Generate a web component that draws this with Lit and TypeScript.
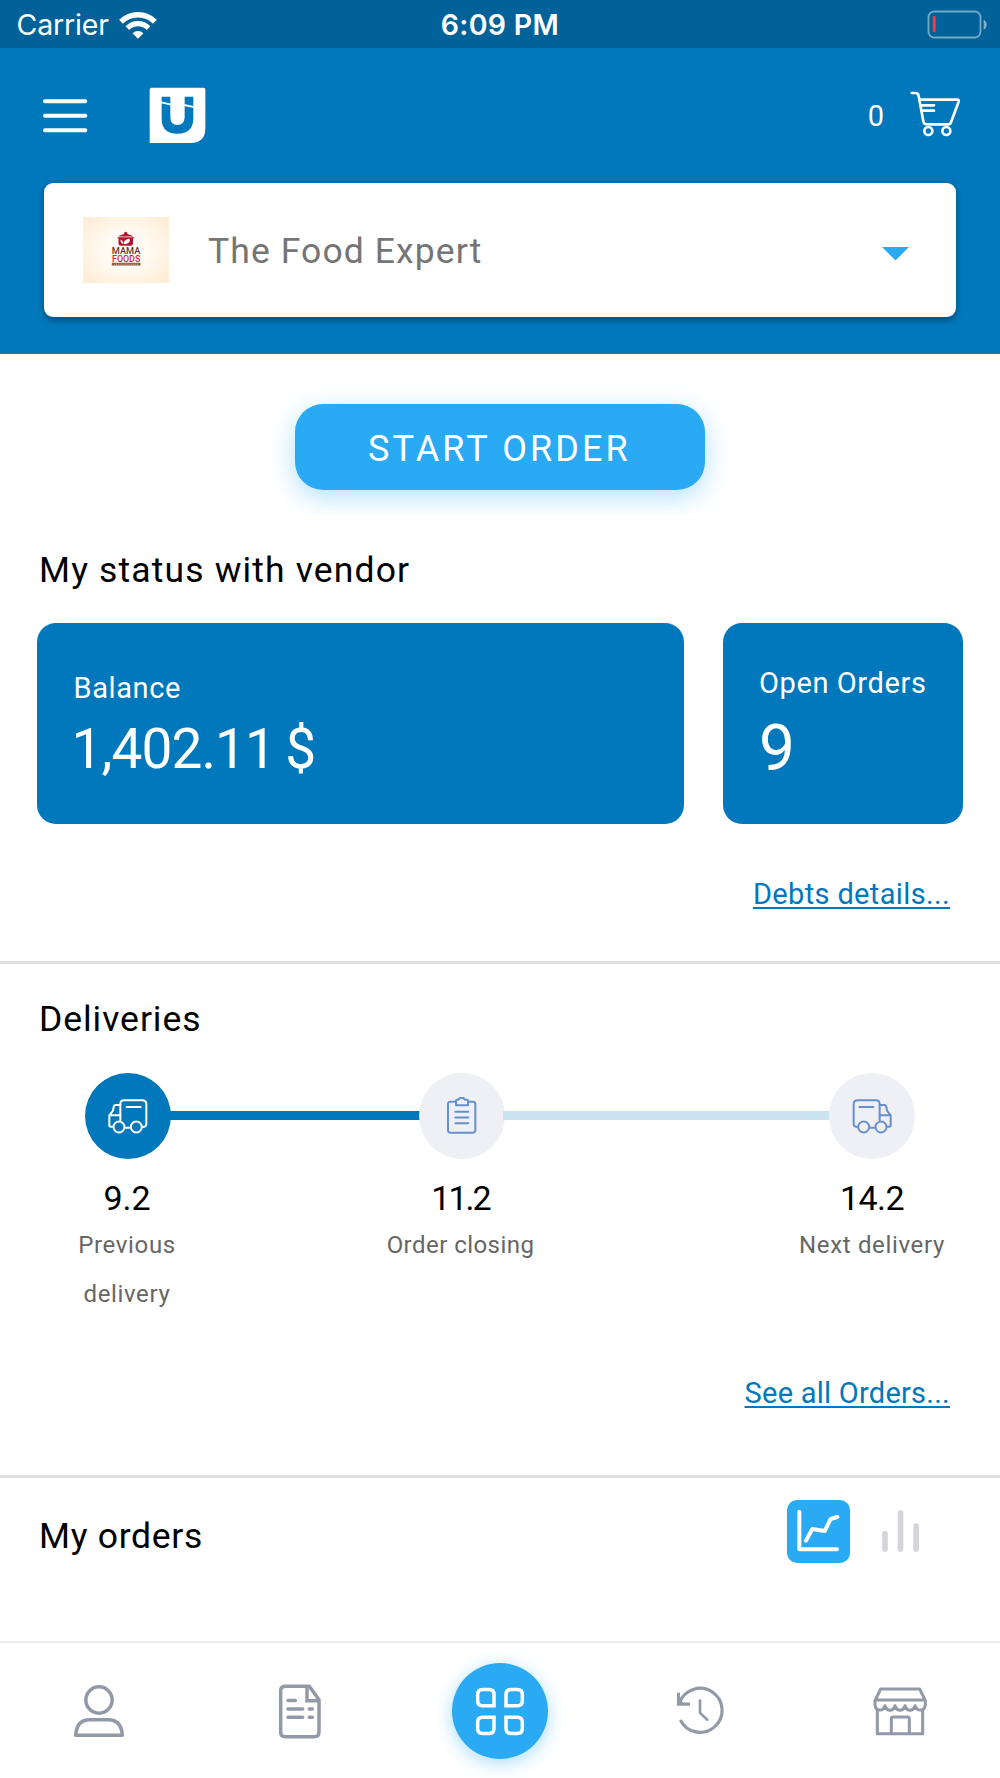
import { LitElement, html, css, svg, nothing } from "lit";
import { customElement, property } from "lit/decorators.js";

/* Icon artwork is drawn on a 3x grid: three view-box units equal one CSS pixel. */
interface Art {
  x: number;
  y: number;
  w: number;
  h: number;
  body: unknown;
}

const truck = svg`
  <g fill="none" stroke="currentColor" stroke-width="6" stroke-linecap="round" stroke-linejoin="round">
    <path d="M360 420V371q0-11 11-11h55q12 0 12 12v59q0 8-9 9M375 442h14"/>
    <path d="M360 374h-14q-5 0-6 6l-2 11-11 14v30q0 4 5 4h7M327 405h33"/>
    <path d="M379 380h42"/>
    <circle cx="356" cy="440" r="16.5"/><circle cx="408" cy="440" r="16.5"/>
  </g>`;

const ART: Record<string, Art> = {
  wifi: { x: 358, y: 28, w: 116, h: 86, body: svg`
    <g fill="none" stroke="#fff">
      <path stroke-width="16.5" d="M364.1 60.1A72 72 0 0 1 465.9 60.1"/>
      <path stroke-width="15.5" d="M383.2 79.2A45 45 0 0 1 446.8 79.2"/>
    </g>
    <path fill="#fff" d="M415 111L398.7 94.7A23 23 0 0 1 431.3 94.7Z"/>` },
  battery: { x: 1282, y: 29, w: 184, h: 88, body: svg`
    <rect x="1286.500" y="33.500" width="156" height="78" rx="17" fill="none" stroke="#fff" stroke-opacity=".45" stroke-width="5.500"/>
    <rect x="1299" y="47" width="9" height="48" rx="3" fill="#ff3b30"/>
    <path d="M1452 58q9 5 9 15t-9 15z" fill="#fff" fill-opacity=".5"/>` },
  menu: { x: 126, y: 294, w: 138, h: 108, body: svg`
    <path d="M135 304H256M135 347.500H256M135 390.500H256" stroke="#fff" stroke-width="12" stroke-linecap="round"/>` },
  brand: { x: 448, y: 263, w: 171, h: 171, body: svg`
    <path fill="#fff" d="M450 271q0-6 6-6h155q6 0 6 6V387q0 44-44 44H450z"/>
    <path fill="#0078bb" d="M486 292h26v62q0 23 21 23t22-23v-62h26v64q0 47-48 47t-47-47z"/>
    <path stroke="#fff" stroke-width="5.500" d="M482 308.500L514 316M553 317L584 323.500"/>` },
  cart: { x: 1225, y: 268, w: 157, h: 144, body: svg`
    <g fill="none" stroke="#fff" stroke-width="8" stroke-linecap="round" stroke-linejoin="round">
      <path d="M1233 277h11q9 0 10 9l14 76q2 9 9 9h66q6 0 8-6l23-62q2-6-5-6H1259"/>
      <path d="M1263 314h37M1266 330h34"/>
      <circle cx="1283" cy="391" r="12"/><circle cx="1337" cy="391" r="12"/>
    </g>` },
  truckLeft: { x: 320, y: 350, w: 126, h: 114, body: truck },
  truckRight: { x: 320, y: 350, w: 126, h: 114, body: svg`<g transform="translate(766 0) scale(-1 1)">${truck}</g>` },
  clipboard: { x: 1322, y: 350, w: 126, h: 114, body: svg`
    <g fill="none" stroke="currentColor" stroke-width="6" stroke-linejoin="round" stroke-linecap="round">
      <path d="M1366 364h-16q-7 0-7 7v79q0 7 7 7h68q7 0 7-7v-79q0-7-7-7h-15"/>
      <path d="M1367 375v-14q0-3 3-3h4q4-6 10-6t10 6h5q4 0 4 3v14z"/>
      <path d="M1365 394h39M1365 411.500h39M1365 429h39"/>
    </g>` },
  line: { x: 862, y: 420, w: 189, h: 189, body: svg`
    <g fill="none" stroke="#fff" stroke-width="12" stroke-linecap="round" stroke-linejoin="round">
      <path d="M899 455V567.500H1012M919 542L938 507L975 513L993 477L1013 471"/>
    </g>` },
  bars: { x: 1140, y: 445, w: 124, h: 132, body: svg`
    <path d="M1155 519.500V565M1201.500 457V565M1248.500 496V565" stroke="#d4d4da" stroke-width="17" stroke-linecap="round"/>` },
  user: { x: 210, y: 151, w: 180, h: 180, body: svg`
    <g fill="none" stroke="currentColor" stroke-width="10.500" stroke-linejoin="round">
      <circle cx="297" cy="208" r="39.500"/>
      <path d="M227 314H367Q364 267 325 267H269Q230 267 227 314Z"/>
    </g>` },
  doc: { x: 810, y: 151, w: 180, h: 180, body: svg`
    <g fill="none" stroke="currentColor" stroke-width="10.500" stroke-linejoin="round" stroke-linecap="round">
      <path d="M928 167H856q-14 0-14 14V304q0 14 14 14h87q14 0 14-14V207Z"/>
      <path stroke-linejoin="miter" d="M921 169V210H956"/>
      <path d="M864 209.500h22M864 235h44M928 235h9M864 260h44M928 260h9"/>
    </g>` },
  grid: { x: -90, y: 151, w: 180, h: 180, body: svg`
    <g fill="none" stroke="#fff" stroke-width="10.500">
      <path d="M-18 225.500H-52q-15 0-15-15v-19q0-15 15-15h19q15 0 15 15z"/>
      <path d="M18 225.500H52q15 0 15-15v-19q0-15-15-15h-19q-15 0-15 15z"/>
      <path d="M-18 259.500H-52q-15 0-15 15v19q0 15 15 15h19q15 0 15-15z"/>
      <path d="M18 259.500H52q15 0 15 15v19q0 15-15 15h-19q-15 0-15-15z"/>
    </g>` },
  history: { x: 510, y: 151, w: 180, h: 180, body: svg`
    <g fill="none" stroke="currentColor" stroke-width="9.500">
      <path d="M538 217A66 66 0 1 1 541 268"/>
      <path d="M535.500 186V220.500H570"/>
      <path stroke-width="8" stroke-linecap="round" stroke-linejoin="round" d="M600 210V247L622 267"/>
    </g>
    <path d="M534 222V200L556 222z" fill="currentColor"/>` },
  store: { x: 1110, y: 151, w: 180, h: 180, body: svg`
    <g fill="none" stroke="currentColor" stroke-width="9" stroke-linejoin="round">
      <path d="M1142 175H1259L1275 208H1126Z"/>
      <path d="M1125 208V222C1127 243 1149 243 1155 225C1161 243 1179 243 1185 225C1191 243 1209 243 1215 225C1221 243 1239 243 1245 225C1251 243 1274 243 1276 222V208"/>
      <path d="M1132 236V309H1268V236"/>
      <path d="M1174 309V264q0-5 5-5h44q5 0 5 5V309"/>
    </g>` },
};

@customElement("app-icon")
class AppIcon extends LitElement {
  @property() name = "";
  static styles = css`
    :host { display: block; flex: none; }
    svg { display: block; }
  `;
  render() {
    const a = ART[this.name];
    if (!a) return nothing;
    return html`<svg width=${a.w / 3} height=${a.h / 3} viewBox="${a.x} ${a.y} ${a.w} ${a.h}" aria-hidden="true">${a.body}</svg>`;
  }
}

@customElement("vendor-logo")
class VendorLogo extends LitElement {
  static styles = css`
    :host { display: block; flex: none; }
    svg { display: block; }
    .name { font-family: Roboto, sans-serif; font-weight: 500; letter-spacing: 0; }
    .first { fill: #5a3a2e; }
    .second { fill: #c5283a; }
  `;
  render() {
    return html`
      <svg width="86" height="66" viewBox="0 0 86 66">
        <defs>
          <radialGradient id="glow" cx=".5" cy=".5" r=".68">
            <stop offset="0" stop-color="#fff"/>
            <stop offset=".45" stop-color="#fff9f0"/>
            <stop offset="1" stop-color="#ffecd2"/>
          </radialGradient>
        </defs>
        <rect width="86" height="66" fill="url(#glow)"/>
        <g fill="#b3142b">
          <circle cx="42.700" cy="16.200" r="1.500"/>
          <path d="M35.500 19.600q1-1.500 3-1.700q4-2.400 8.500 0q2 .2 3 1.700z"/>
          <path d="M34.500 20.300h16.500v1H50v5q0 2.500-2.600 2.500h-9.300q-2.600 0-2.600-2.500v-5h-1z"/>
        </g>
        <path d="M41 27.300q-1.500-4 5.500-5.800q1.500 5.300-5.500 5.800zM37.500 22.500q3 1 2.800 4.500q-3-1-2.800-4.500z" fill="#fff"/>
        <text class="name" font-size="8.800"><tspan class="first" x="28.800" y="36.700" textLength="28.500" lengthAdjust="spacingAndGlyphs">MAMA</tspan><tspan class="second" x="29" y="44.700" textLength="28.300" lengthAdjust="spacingAndGlyphs">FOODS</tspan></text>
        <rect x="28.800" y="45.800" width="28.700" height="2.700" fill="#8a5a42"/>
        <path d="M31 47.200h24" stroke="#d9bda8" stroke-width=".8" stroke-dasharray="1.200 .7"/>
      </svg>`;
  }
}

const STOPS = [
  { id: "previous", date: "9.2", label: "Previous delivery", icon: "truckLeft" },
  { id: "closing", date: "11.2", label: "Order closing", icon: "clipboard" },
  { id: "next", date: "14.2", label: "Next delivery", icon: "truckRight" },
];

const TABS = ["user", "doc", "grid", "history", "store"];

@customElement("app-root")
class AppRoot extends LitElement {
  static styles = css`
    :host {
      display: block;
      width: 1000px;
      height: 1778px;
      overflow: hidden;
      background: #fff;
      color: #000;
      font-family: Roboto, "Liberation Sans", sans-serif;
      -webkit-font-smoothing: antialiased;
    }
    * { box-sizing: border-box; }
    .screen { display: flex; flex-direction: column; height: 1778px; }

    .status {
      display: grid;
      grid-template-columns: 1fr auto 1fr;
      align-items: center;
      height: 48px;
      padding: 2px 11.5px 0 11.5px;
      background: #006299;
      color: #fff;
      font: 400 28.5px/46px Inter, sans-serif;
    }
    .carrier { display: flex; align-items: center; gap: 10px; padding-left: 5px; letter-spacing: -0.15px; }
    .clock { font-weight: 600; font-size: 28.5px; letter-spacing: 0.3px; }
    .power { justify-self: end; }

    .header { height: 306px; background: #0078bb; color: #fff; padding: 0 44.5px 0 44px; }
    .bar { display: flex; align-items: center; height: 135px; margin: 0 -5.5px 0 -2.5px; }
    .brand { margin-left: 61px; }
    .count { margin-left: auto; margin-right: 24.5px; font-size: 29px; line-height: 40px; padding-top: 1px; }
    .cart { margin-bottom: 4px; }
    .vendor {
      display: flex;
      align-items: center;
      height: 134px;
      padding: 0 46px 0 39px;
      border-radius: 9px;
      background: #fff;
      box-shadow: 0 4px 6px rgba(0, 0, 0, 0.27), 0 0 6px rgba(0, 0, 0, 0.12);
      color: #757575;
      font-size: 35.5px;
      letter-spacing: 1.1px;
    }
    .vendor-name { margin-left: 39px; padding-top: 2px; }
    .caret {
      width: 28px;
      height: 14px;
      margin-left: auto;
      margin-top: 7px;
      background: #29aaf2;
      clip-path: polygon(0 0, 100% 0, 50% 100%);
    }

    .hero { display: flex; justify-content: center; height: 161px; padding-top: 50px; overflow: hidden; }
    .start {
      width: 410px;
      height: 86px;
      padding: 5px 1px 0 0;
      border: 0;
      border-radius: 28px;
      background: #29aaf2;
      box-shadow: 0 7px 26px rgba(41, 170, 242, 0.36);
      color: #fff;
      font: 400 36px/81px Roboto, sans-serif;
      letter-spacing: 3.1px;
      text-align: center;
    }

    .heading { margin: 0; font-size: 35.5px; font-weight: 400; line-height: 50px; letter-spacing: 1.1px; }
    .link {
      align-self: flex-end;
      color: #0078bb;
      font-size: 29px;
      line-height: 40px;
      text-decoration: underline;
      text-decoration-thickness: 2px;
      text-underline-offset: 3px;
      text-decoration-skip-ink: none;
    }
    .debts { margin: 50px 13px 0 0; letter-spacing: 0.36px; }
    .all { letter-spacing: 0.25px; }

    .money { display: flex; flex-direction: column; height: 446px; padding: 30px 37px 0; }
    .money .heading { padding-left: 2px; letter-spacing: 1.15px; }
    .cards { display: flex; justify-content: space-between; margin-top: 28px; }
    .card { height: 200.5px; border-radius: 19px; background: #0078bb; color: #fff; padding-left: 36.5px; }
    .balance { width: 647px; padding-top: 45px; }
    .open { width: 240px; padding-top: 40px; padding-left: 36px; }
    .card-label { font-size: 29px; line-height: 40px; letter-spacing: 0.6px; }
    .card-value { white-space: nowrap; }
    .balance .card-value { margin-top: 11px; margin-left: -2px; font-size: 55px; line-height: 60px; letter-spacing: -0.9px; word-spacing: -2.5px; }
    .open .card-value { margin-top: 11px; margin-left: 0; font-size: 64px; line-height: 69px; }

    .rule { flex: none; height: 3px; background: #dfdfdf; }

    .deliveries { display: flex; flex-direction: column; height: 511px; padding: 30px 0 0; }
    .deliveries .heading { padding-left: 39px; letter-spacing: 0.95px; }
    .track {
      display: grid;
      grid-template-columns: 85px 86px 248px 86px 324px 86px;
      align-items: center;
      height: 86.5px;
      margin-top: 28.5px;
    }
    .dot {
      display: flex;
      align-items: center;
      justify-content: center;
      height: 86px;
      border-radius: 50%;
      background: #eff0f6;
      color: #668fd0;
    }
    .dot.done { background: #0078bb; color: #fff; }
    .dot.previous { grid-column: 2; }
    .segment { height: 9px; margin: 0 -2px; background: #0078bb; }
    .segment.ahead { background: #cbe3f0; }
    .stops { display: grid; grid-template-columns: 254px 413px 410px; height: 178px; padding-top: 11px; margin-right: -77px; }
    .stop { text-align: center; }
    .stop.previous { padding: 0 62px; }
    .date { font-size: 34px; line-height: 56px; }
    .closing .date { letter-spacing: -2px; }
    .next .date { letter-spacing: -0.6px; }
    .stop-label { font-size: 24px; line-height: 48.5px; letter-spacing: 0.65px; color: #666; margin-top: -5px; }
    .closing .stop-label { letter-spacing: 0.45px; }
    .all { margin: 36px 50px 0 0; }

    .orders { display: flex; justify-content: space-between; height: 163px; padding: 0 79px 0 39px; }
    .orders .heading { margin-top: 33px; letter-spacing: 0.7px; }
    .toggle { display: flex; align-items: flex-start; gap: 30px; padding-top: 22px; }
    .mode { display: flex; align-items: center; height: 61px; }
    .mode.on { height: 63px; border-radius: 10px; background: #29aaf2; }

    .tabs {
      display: grid;
      grid-template-columns: repeat(5, 1fr);
      align-items: center;
      justify-items: center;
      height: 137px;
      border-top: 2px solid #ebebeb;
      color: #9299a7;
    }
    .tab { display: flex; align-items: center; justify-content: center; width: 96px; height: 96px; }
    .tab.grid { border-radius: 50%; background: #29aaf2; box-shadow: 0 4px 18px rgba(41, 170, 242, 0.4); }
  `;

  render() {
    return html`
      <div class="screen">
        <div class="status">
          <div class="carrier"><span>Carrier</span><app-icon name="wifi"></app-icon></div>
          <div class="clock">6:09 PM</div>
          <app-icon class="power" name="battery"></app-icon>
        </div>

        <header class="header">
          <div class="bar">
            <app-icon name="menu"></app-icon>
            <app-icon class="brand" name="brand"></app-icon>
            <span class="count">0</span>
            <app-icon class="cart" name="cart"></app-icon>
          </div>
          <div class="vendor">
            <vendor-logo></vendor-logo>
            <span class="vendor-name">The Food Expert</span>
            <span class="caret"></span>
          </div>
        </header>

        <div class="hero"><button class="start">START ORDER</button></div>

        <section class="money">
          <h2 class="heading">My status with vendor</h2>
          <div class="cards">
            <div class="card balance">
              <div class="card-label">Balance</div>
              <div class="card-value">1,402.11 $</div>
            </div>
            <div class="card open">
              <div class="card-label">Open Orders</div>
              <div class="card-value">9</div>
            </div>
          </div>
          <a class="link debts">Debts details...</a>
        </section>
        <div class="rule"></div>

        <section class="deliveries">
          <h2 class="heading">Deliveries</h2>
          <div class="track">
            ${STOPS.map((s, i) => html`
              ${i ? html`<div class="segment ${i > 1 ? "ahead" : ""}"></div>` : nothing}
              <div class="dot ${s.id} ${i ? "" : "done"}"><app-icon name=${s.icon}></app-icon></div>`)}
          </div>
          <div class="stops">
            ${STOPS.map((s) => html`
              <div class="stop ${s.id}">
                <div class="date">${s.date}</div>
                <div class="stop-label">${s.label}</div>
              </div>`)}
          </div>
          <a class="link all">See all Orders...</a>
        </section>
        <div class="rule"></div>

        <section class="orders">
          <h2 class="heading">My orders</h2>
          <div class="toggle">
            <div class="mode on"><app-icon name="line"></app-icon></div>
            <div class="mode"><app-icon name="bars"></app-icon></div>
          </div>
        </section>

        <nav class="tabs">
          ${TABS.map((t) => html`<div class="tab ${t}"><app-icon name=${t}></app-icon></div>`)}
        </nav>
      </div>`;
  }
}
